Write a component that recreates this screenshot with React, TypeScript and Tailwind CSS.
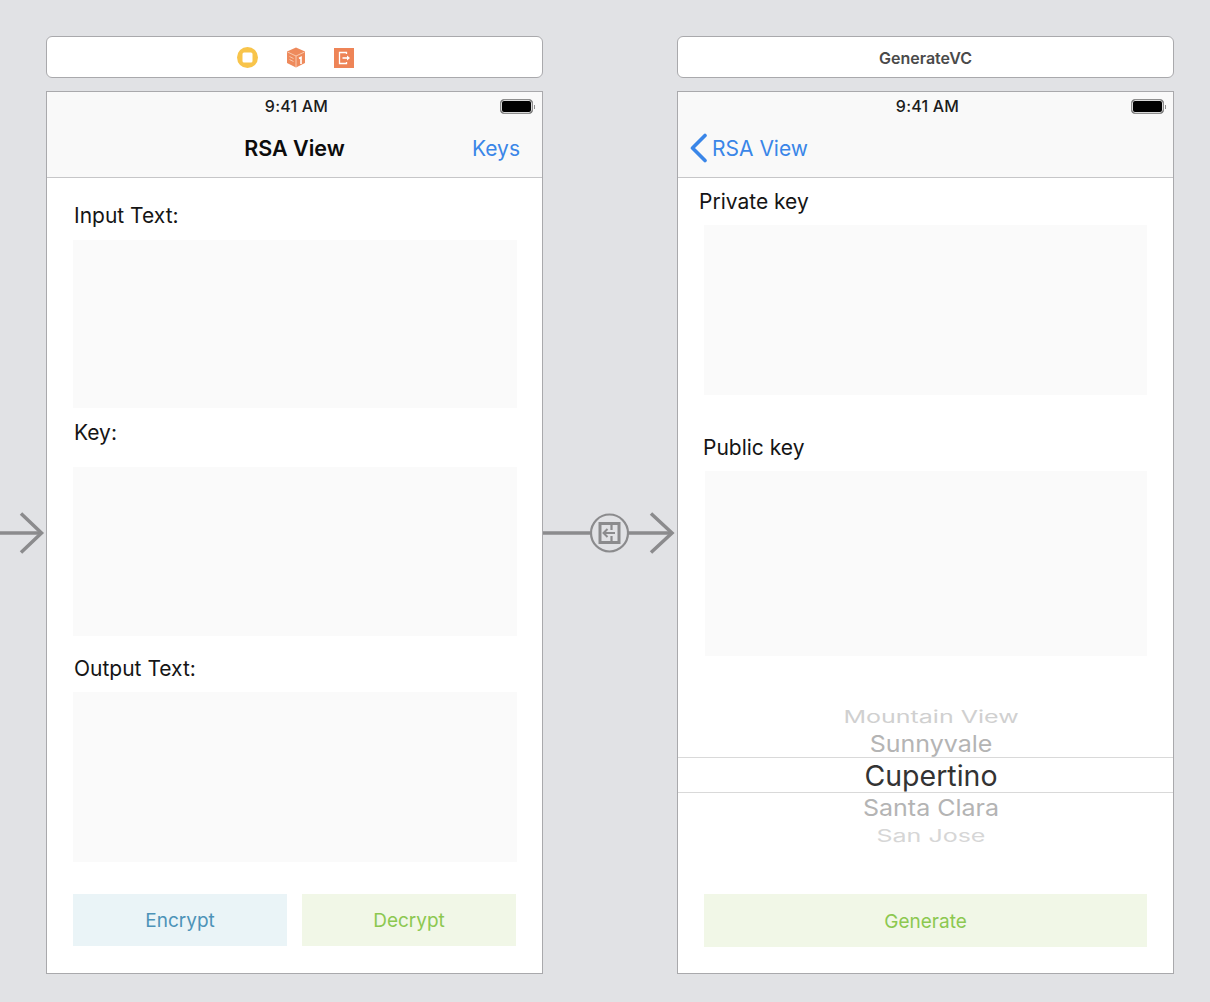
const font = "font-['Inter','Liberation_Sans',sans-serif]";

function EntryArrow() {
  return (
    <svg width="46" height="46" viewBox="0 0 46 46" className="shrink-0">
      <path d="M0 23H41" stroke="#8b8b8d" strokeWidth="3.5" fill="none" />
      <path d="M21 3.5L41.5 23L21 42.5" stroke="#8b8b8d" strokeWidth="3.5" fill="none" />
    </svg>
  );
}

function Segue() {
  return (
    <svg width="134" height="46" viewBox="0 0 134 46" className="shrink-0">
      <path d="M0 23H47M85 23H128" stroke="#8b8b8d" strokeWidth="3.5" fill="none" />
      <path d="M108 3.5L129 23L108 42.5" stroke="#8b8b8d" strokeWidth="3.5" fill="none" />
      <circle cx="66.5" cy="23" r="18.5" fill="#e1e2e5" stroke="#8b8b8d" strokeWidth="2.2" />
      <rect x="57" y="13.5" width="19" height="19" fill="none" stroke="#8b8b8d" strokeWidth="3" />
      <path d="M68.5 14V20M68.5 26V32" stroke="#8b8b8d" strokeWidth="2.2" fill="none" />
      <path d="M72 23H60.5M64.5 19L60.5 23L64.5 27" stroke="#8b8b8d" strokeWidth="2" fill="none" />
    </svg>
  );
}

function SceneIcons() {
  return (
    <div className="flex h-full items-center justify-center gap-[28px] pl-[1px] pt-[1px]">
      <svg width="21" height="21" viewBox="0 0 21 21">
        <circle cx="10.5" cy="10.5" r="10.5" fill="#f8c44a" />
        <rect x="5.5" y="5.5" width="10" height="10" rx="1.5" fill="#ffffff" />
      </svg>
      <svg width="20" height="21" viewBox="0 0 20 21">
        <path d="M10 0.5L19 4.5V16L10 20.5L1 16V4.5Z" fill="#ee8a5c" />
        <path d="M1.5 5L10 9L18.5 5M10 9V20" stroke="#f9c9ae" strokeWidth="1" fill="none" />
        <path d="M3.5 9.5L7.5 11.5M3.5 12.5L7.5 14.5" stroke="#f9c9ae" strokeWidth="1" fill="none" />
        <path d="M13 11.5L15 10.3V17" stroke="#ffffff" strokeWidth="1.6" fill="none" />
      </svg>
      <svg width="20" height="20" viewBox="0 0 20 20">
        <rect width="20" height="20" fill="#ee8457" />
        <path d="M12.5 6V4.5H5.5V15.5H12.5V14" stroke="#ffffff" strokeWidth="1.3" fill="none" />
        <path d="M8.5 10H14" stroke="#ffffff" strokeWidth="1.6" fill="none" />
        <path d="M13 7.5L16 10L13 12.5Z" fill="#ffffff" />
      </svg>
    </div>
  );
}

function SceneHeader({ children }: { children: React.ReactNode }) {
  return (
    <div className="h-[42px] w-[497px] shrink-0 rounded-[6px] border border-[#a9a9ac] bg-white">
      {children}
    </div>
  );
}

function StatusBar() {
  return (
    <div className="relative flex h-[30px] items-center justify-center pb-[3px] pl-[4px]">
      <span className="text-[16px] font-medium leading-none tracking-[0.2px] text-[#1c1c1c]">9:41 AM</span>
      <div className="absolute right-[7px] top-[7px] flex items-center">
        <div className="h-[15px] w-[33px] rounded-[4px] border border-[#8e8e8e] bg-black outline outline-1 -outline-offset-2 outline-[#d8d8d8]" />
        <div className="ml-[1px] h-[4px] w-[1px] bg-[#8e8e8e]" />
      </div>
    </div>
  );
}

function NavBar({ children }: { children: React.ReactNode }) {
  return (
    <div className="h-[86px] shrink-0 border-b border-[#c6c6c8] bg-[#f9f9f9]">
      <StatusBar />
      <div className="relative flex h-[55px] items-center justify-center pb-[3px]">{children}</div>
    </div>
  );
}

function Label({ text, className }: { text: string; className: string }) {
  return <div className={`h-[24px] pt-[1px] text-[21px] leading-[24px] text-[#151515] ${className}`}>{text}</div>;
}

function LeftDevice() {
  return (
    <div className="flex h-[883px] w-[497px] shrink-0 flex-col border border-[#a9a9ac] bg-white">
      <NavBar>
        <span className="text-[21.5px] font-semibold text-[#0c0c0c]">RSA View</span>
        <span className="absolute right-[22px] top-[14px] text-[21px] leading-[26px] text-[#3a86e8]">Keys</span>
      </NavBar>
      <div className="flex flex-col pl-[26px]">
        <Label text="Input Text:" className="mt-[25px] pl-[1px]" />
        <div className="mt-[13px] h-[168px] w-[444px] bg-[#fafafa]" />
        <Label text="Key:" className="mt-[12px] pl-[1px]" />
        <div className="mt-[23px] h-[169px] w-[444px] bg-[#fafafa]" />
        <Label text="Output Text:" className="mt-[20px] pl-[1px]" />
        <div className="mt-[12px] h-[170px] w-[444px] bg-[#fafafa]" />
        <div className="mt-[32px] flex gap-[15px]">
          <div className="flex h-[52px] w-[214px] items-center justify-center bg-[#eaf4f7] pt-[3px] text-[19px] text-[#4c93b8]">Encrypt</div>
          <div className="flex h-[52px] w-[214px] items-center justify-center bg-[#f1f7e7] pt-[3px] text-[19px] text-[#8cc850]">Decrypt</div>
        </div>
      </div>
    </div>
  );
}

function Picker() {
  return (
    <div className="mt-[46px] flex flex-col items-center pl-[11px]">
      <div className="flex h-[28px] w-full items-center justify-center pt-[3px] text-[25px] text-[#d0d0d0] scale-y-[0.68]">Mountain View</div>
      <div className="flex h-[27px] w-full items-center justify-center pt-[2px] text-[25px] text-[#b4b4b4] scale-y-[0.92]">Sunnyvale</div>
      <div className="-ml-[11px] flex h-[36px] w-[495px] items-center justify-center border-y border-[#d9d9d9] pl-[11px] pt-[2px] text-[28.5px] text-[#333333]">Cupertino</div>
      <div className="flex h-[29px] w-full items-center justify-center pt-[3px] text-[25px] text-[#b4b4b4] scale-y-[0.92]">Santa Clara</div>
      <div className="flex h-[27px] w-full items-center justify-center pt-[2px] text-[25px] text-[#d6d6d6] scale-y-[0.68]">San Jose</div>
    </div>
  );
}

function RightDevice() {
  return (
    <div className="flex h-[883px] w-[497px] shrink-0 flex-col border border-[#a9a9ac] bg-white">
      <NavBar>
        <div className="absolute left-[11px] top-[11px] flex items-center gap-[4px]">
          <svg width="19" height="30" viewBox="0 0 19 30">
            <path d="M16 2.5L3.5 15L16 27.5" stroke="#3a86e8" strokeWidth="3.6" strokeLinecap="round" strokeLinejoin="round" fill="none" />
          </svg>
          <span className="pt-[2px] text-[21px] leading-[26px] text-[#3a86e8]">RSA View</span>
        </div>
      </NavBar>
      <div className="flex flex-col">
        <Label text="Private key" className="ml-[21px] mt-[11px]" />
        <div className="ml-[26px] mt-[12px] h-[170px] w-[443px] bg-[#fafafa]" />
        <Label text="Public key" className="ml-[25px] mt-[40px]" />
        <div className="ml-[27px] mt-[12px] h-[185px] w-[442px] bg-[#fafafa]" />
        <Picker />
        <div className="ml-[26px] mt-[45px] flex h-[53px] w-[443px] items-center justify-center bg-[#f1f7e7] pt-[3px] text-[19px] text-[#8cc850]">Generate</div>
      </div>
    </div>
  );
}

export default function App() {
  return (
    <div className={`h-[1002px] w-[1210px] overflow-hidden bg-[#e1e2e5] pt-[36px] ${font}`}>
      <div className="flex pl-[46px]">
        <SceneHeader>
          <SceneIcons />
        </SceneHeader>
        <div className="w-[134px] shrink-0" />
        <SceneHeader>
          <div className="flex h-full items-center justify-center pt-[1px] text-[16px] font-semibold text-[#4a4a4a]">GenerateVC</div>
        </SceneHeader>
      </div>
      <div className="mt-[13px] flex items-center">
        <EntryArrow />
        <LeftDevice />
        <Segue />
        <RightDevice />
      </div>
    </div>
  );
}
